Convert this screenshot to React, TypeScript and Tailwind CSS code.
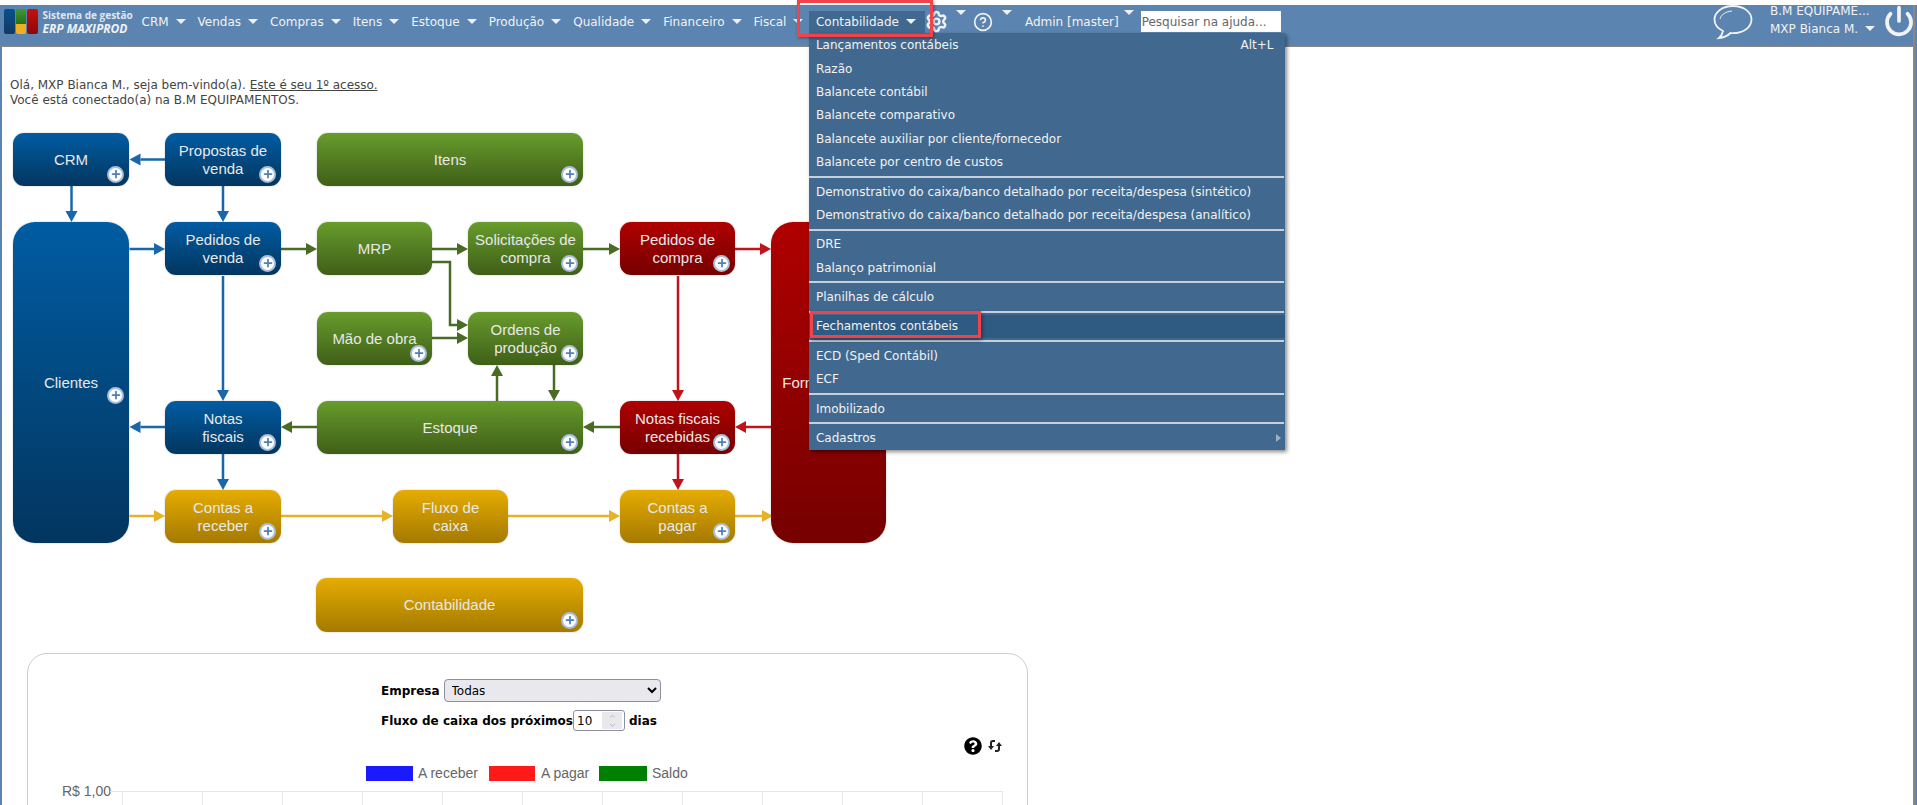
import { ChevronDown, ChevronUp, CircleHelp, Plus, Power, Settings } from "lucide-react";
import { FaQuestionCircle } from "react-icons/fa";

// Top menu entries, left to right
const navItems = ["CRM", "Vendas", "Compras", "Itens", "Estoque", "Produção", "Qualidade", "Financeiro", "Fiscal"];

// Contabilidade dropdown, one array per block between separators
const menuGroups = [
  ["Lançamentos contábeis", "Razão", "Balancete contábil", "Balancete comparativo", "Balancete auxiliar por cliente/fornecedor", "Balancete por centro de custos"],
  ["Demonstrativo do caixa/banco detalhado por receita/despesa (sintético)", "Demonstrativo do caixa/banco detalhado por receita/despesa (analítico)"],
  ["DRE", "Balanço patrimonial"],
  ["Planilhas de cálculo"],
  ["Fechamentos contábeis"],
  ["ECD (Sped Contábil)", "ECF"],
  ["Imobilizado"],
  ["Cadastros"],
];

const BLUE = "bg-gradient-to-b from-[#015ca3] to-[#02365f]";
const GREEN = "bg-gradient-to-b from-[#689c2c] to-[#3f5f18]";
const RED = "bg-gradient-to-b from-[#b00000] to-[#760000]";
const GOLD = "bg-gradient-to-b from-[#e6ac00] to-[#a47a00]";

// Diagram nodes, placed on the canvas
const nodes = [
  { label: ["CRM"], color: BLUE, box: "left-[0px] top-[0px] w-[116px] h-[53px]" },
  { label: ["Propostas de", "venda"], color: BLUE, box: "left-[152px] top-[0px] w-[116px] h-[53px]" },
  { label: ["Itens"], color: GREEN, box: "left-[304px] top-[0px] w-[266px] h-[53px]" },
  { label: ["Clientes"], color: BLUE, box: "left-[0px] top-[89px] w-[116px] h-[321px] rounded-[22px]", badge: "bottom-[139.5px]" },
  { label: ["Pedidos de", "venda"], color: BLUE, box: "left-[152px] top-[89px] w-[116px] h-[53px]" },
  { label: ["MRP"], color: GREEN, box: "left-[304px] top-[89px] w-[115px] h-[53px]", noBadge: true },
  { label: ["Solicitações de", "compra"], color: GREEN, box: "left-[455px] top-[89px] w-[115px] h-[53px]" },
  { label: ["Pedidos de", "compra"], color: RED, box: "left-[607px] top-[89px] w-[115px] h-[53px]" },
  { label: ["Fornecedores"], color: RED, box: "left-[758px] top-[89px] w-[115px] h-[321px] rounded-[22px]", noBadge: true },
  { label: ["Mão de obra"], color: GREEN, box: "left-[304px] top-[179px] w-[115px] h-[53px]" },
  { label: ["Ordens de", "produção"], color: GREEN, box: "left-[455px] top-[179px] w-[115px] h-[53px]" },
  { label: ["Notas", "fiscais"], color: BLUE, box: "left-[152px] top-[268px] w-[116px] h-[53px]" },
  { label: ["Estoque"], color: GREEN, box: "left-[304px] top-[268px] w-[266px] h-[53px]" },
  { label: ["Notas fiscais", "recebidas"], color: RED, box: "left-[607px] top-[268px] w-[115px] h-[53px]" },
  { label: ["Contas a", "receber"], color: GOLD, box: "left-[152px] top-[357px] w-[116px] h-[53px]" },
  { label: ["Fluxo de", "caixa"], color: GOLD, box: "left-[380px] top-[357px] w-[115px] h-[53px]", noBadge: true },
  { label: ["Contas a", "pagar"], color: GOLD, box: "left-[607px] top-[357px] w-[115px] h-[53px]" },
  { label: ["Contabilidade"], color: GOLD, box: "left-[303px] top-[445px] w-[267px] h-[54px]" },
];

const lineBlue = "#1a66ab";
const lineGreen = "#4a6b24";
const lineRed = "#c0141c";
const lineGold = "#e8b228";

// Connectors in page coordinates, the last point is the arrow tip
const arrows: { pts: number[][]; color: string }[] = [
  { pts: [[165, 160.5], [129.5, 160.5]], color: lineBlue },
  { pts: [[71.5, 187], [71.5, 223]], color: lineBlue },
  { pts: [[223, 187], [223, 223]], color: lineBlue },
  { pts: [[129.5, 250], [165, 250]], color: lineBlue },
  { pts: [[223, 277], [223, 402]], color: lineBlue },
  { pts: [[165, 428], [129.5, 428]], color: lineBlue },
  { pts: [[223, 455], [223, 491]], color: lineBlue },
  { pts: [[281, 250], [317, 250]], color: lineGreen },
  { pts: [[432, 250], [468, 250]], color: lineGreen },
  { pts: [[583, 250], [620, 250]], color: lineGreen },
  { pts: [[432, 263], [450, 263], [450, 326], [468, 326]], color: lineGreen },
  { pts: [[432, 339], [468, 339]], color: lineGreen },
  { pts: [[497, 402], [497, 366]], color: lineGreen },
  { pts: [[554, 366], [554, 402]], color: lineGreen },
  { pts: [[317, 428], [281, 428]], color: lineGreen },
  { pts: [[620, 428], [583, 428]], color: lineGreen },
  { pts: [[735, 250], [771, 250]], color: lineRed },
  { pts: [[678, 277], [678, 402]], color: lineRed },
  { pts: [[771, 428], [735, 428]], color: lineRed },
  { pts: [[678, 455], [678, 491]], color: lineRed },
  { pts: [[129.5, 517], [165, 517]], color: lineGold },
  { pts: [[281, 517], [393, 517]], color: lineGold },
  { pts: [[508, 517], [620, 517]], color: lineGold },
  { pts: [[735, 517], [773, 517]], color: lineGold },
];

const Caret = () => (
  <span className="w-0 h-0 border-x-[5px] border-t-[5px] border-x-transparent border-t-[#f0f0f0]" />
);

const Arrow = ({ pts, color }: { pts: number[][]; color: string }) => {
  const [x1, y1] = pts[pts.length - 2];
  const [x2, y2] = pts[pts.length - 1];
  const len = Math.hypot(x2 - x1, y2 - y1);
  const ux = (x2 - x1) / len;
  const uy = (y2 - y1) / len;
  const bx = x2 - ux * 11;
  const by = y2 - uy * 11;
  const line = pts.slice(0, -1).concat([[bx, by]]).map((p) => p.join(",")).join(" ");
  const head = `${x2},${y2} ${bx - uy * 6},${by + ux * 6} ${bx + uy * 6},${by - ux * 6}`;
  return (
    <>
      <polyline points={line} fill="none" stroke={color} strokeWidth="2.5" />
      <polygon points={head} fill={color} />
    </>
  );
};

const Node = ({ label, color, box, badge, noBadge }: { label: string[]; color: string; box: string; badge?: string; noBadge?: boolean }) => (
  <div className={`absolute rounded-[11px] flex flex-col items-center justify-center text-[15px] leading-[18px] text-[#e8e8e8] shadow-[0_0_2px_rgba(0,0,0,0.25)] ${color} ${box}`}>
    {label.map((line) => (
      <span key={line}>{line}</span>
    ))}
    {!noBadge && (
      <span className={`absolute right-[5px] w-[17px] h-[17px] rounded-full bg-white border-2 border-[#a9bedb] flex items-center justify-center ${badge ?? "bottom-[3.5px]"}`}>
        <Plus size={12} strokeWidth={3.5} className="text-[#4f7fb5]" />
      </span>
    )}
  </div>
);

// Contabilidade dropdown
const AccountingMenu = () => (
  <div className="absolute left-0 top-full w-[475.5px] pt-[1px] pb-[0.5px] bg-[#41698f] text-[#f2f2f2] shadow-[2px_2px_4px_rgba(0,0,0,0.45)] z-20">
    {menuGroups.map((group, i) => (
      <div key={i}>
        {i > 0 && <div className="h-[2px] my-[2px] mr-[1px] bg-[#c5d0dc]" />}
        {group.map((item) => (
          <div
            key={item}
            className={`h-[23.4px] pl-[6.5px] pr-[11.5px] flex items-center justify-between whitespace-nowrap ${item === "Fechamentos contábeis" ? "bg-[#2f5a82]" : ""}`}
          >
            <span>{item}</span>
            {item === "Lançamentos contábeis" && <span>Alt+L</span>}
            {item === "Cadastros" && (
              <span className="-mr-[8px] w-0 h-0 border-y-[4px] border-l-[5px] border-y-transparent border-l-[#9fb0c2]" />
            )}
          </div>
        ))}
      </div>
    ))}
    {/* red marker around the highlighted entry */}
    <div className="absolute left-[0.5px] top-[278px] w-[171px] h-[27px] border-[3px] border-[#f3434a] shadow-[1px_2px_4px_rgba(0,0,0,0.45)]" />
  </div>
);

export default function App() {
  return (
    <div className="w-[1917px] h-[805px] overflow-hidden bg-white pt-[5px] text-[12px] font-['DejaVu_Sans',Verdana,sans-serif]">
      <div className="h-[800px] border-r-2 border-[#5b84b1]">
        <div className="h-[800px] border-r-2 border-[#888888] flex flex-col">
          {/* top bar */}
          <header className="relative h-[42px] shrink-0 bg-[#5b84b1] border-b border-[#888888] pb-[8px] pl-[4px] flex items-center text-[#f2f2f2] z-10">
            {/* logo */}
            <div className="flex items-center gap-[1px] h-[25px] mr-[5px]">
              <span className="w-[10.5px] h-[25px] rounded-[2px] bg-gradient-to-b from-[#06508e] to-[#123a62]" />
              <span className="w-[10.5px] h-[25px] rounded-[2px] flex flex-col overflow-hidden">
                <span className="h-[15px] bg-gradient-to-b from-[#3d9a2f] to-[#2a6d1f]" />
                <span className="h-[10px] bg-[#eeb01c]" />
              </span>
              <span className="w-[10.5px] h-[25px] rounded-[2px] bg-gradient-to-b from-[#c51010] to-[#8e0808]" />
            </div>
            <div className="w-[99px] flex flex-col font-['Open_Sans',sans-serif] font-bold leading-[14px] whitespace-nowrap">
              <span className="text-[10px] text-[#dfe6ee]">Sistema de gestão</span>
              <span className="text-[12px] italic">ERP MAXIPROD</span>
            </div>

            {navItems.map((item) => (
              <div key={item} className="flex items-center gap-[7px] mr-[12px]">
                <span>{item}</span>
                <Caret />
              </div>
            ))}

            {/* open menu */}
            <div className="relative h-[22px] w-[115.5px] -ml-[6px] pl-[6.5px] bg-[#41698f] flex items-center gap-[7px]">
              <span>Contabilidade</span>
              <Caret />
              <div className="absolute -left-[12.5px] -top-[11px] w-[136.5px] h-[37.5px] border-[3px] border-[#f3434a] shadow-[1px_1px_3px_rgba(0,0,0,0.4)] z-30" />
              <AccountingMenu />
            </div>

            <Settings size={23} strokeWidth={2.6} className="ml-[0px] text-[#eef1f5]" />
            <span className="ml-[8px]"><Caret /></span>
            <CircleHelp size={20} strokeWidth={2} className="ml-[7px] text-[#f2f2f2]" />
            <span className="ml-[9px]"><Caret /></span>
            <span className="ml-[13px]">Admin [master]</span>
            <span className="ml-[5px]"><Caret /></span>
            <input
              readOnly
              placeholder="Pesquisar na ajuda..."
              className="ml-[7px] w-[140px] h-[21px] pl-[1px] bg-white text-[12px] outline-none placeholder:text-[#666666]"
            />

            {/* right side */}
            <svg viewBox="0 0 40 36" className="ml-auto w-[40px] h-[36px] mr-[17px]" fill="none" stroke="#f2f2f2" strokeWidth="1.8">
              <path d="M20 2C9.5 2 1.5 8 1.5 15.5c0 5 3.4 9 8.500 11.500-.5 2.500-1.500 5-4 7 5-.5 9-2.500 11.500-5 1 .1 1.800.2 2.500.2 10.500 0 18.500-6 18.500-13.700S30.500 2 20 2z" />
              <path d="M7 15c1-4.500 6-7.500 12-8" strokeWidth="1" />
            </svg>
            <div className="flex flex-col leading-[18px] w-[116px] -mt-[4px]">
              <span>B.M EQUIPAME...</span>
              <span className="flex items-center gap-[7px]">
                MXP Bianca M. <Caret />
              </span>
            </div>
            <Power size={32} strokeWidth={2.8} className="text-[#f2f2f2] mr-[-2px] ml-[-3px] -mt-[2px]" />
          </header>

          <main className="flex-1 overflow-hidden bg-white border-l-2 border-[#5b84b1]">
            <p className="pt-[31px] pl-[8px] leading-[15px] text-[#444444]">
              Olá, MXP Bianca M., seja bem-vindo(a). <span className="underline">Este é seu 1º acesso.</span>
              <br />
              Você está conectado(a) na B.M EQUIPAMENTOS.
            </p>

            {/* process diagram */}
            <div className="relative ml-[11px] mt-[25px] w-[880px] h-[499px] font-['Liberation_Sans',Arial,sans-serif]">
              <svg viewBox="13 134 880 499" className="absolute inset-0 w-[880px] h-[499px]">
                {arrows.map((a, i) => (
                  <Arrow key={i} pts={a.pts} color={a.color} />
                ))}
              </svg>
              {nodes.map((n) => (
                <Node key={n.label.join(" ")} {...n} />
              ))}
            </div>

            {/* cash flow card */}
            <section className="ml-[25px] mt-[21px] w-[1001px] h-[220px] border border-[#cccccc] rounded-[20px] pt-[25px]">
              <div className="ml-[353px] text-black">
                <div className="flex items-center">
                  <label className="font-bold w-[62.5px]">Empresa</label>
                  <select className="w-[217px] h-[23px] pl-[3px] bg-[#e9e9ed] border border-[#8f8f9d] rounded-[4px]">
                    <option>Todas</option>
                  </select>
                </div>
                <div className="flex items-center mt-[8px]">
                  <label className="font-bold w-[192px] whitespace-nowrap">Fluxo de caixa dos próximos</label>
                  <div className="w-[52px] h-[21px] pl-[3px] pr-[2px] border border-[#8f8f9d] rounded-[3px] flex items-center justify-between">
                    <span>10</span>
                    <span className="w-[20px] h-[17px] bg-[#e9e9ed] flex flex-col items-center text-[#8a8a8a]">
                      <ChevronUp size={9} strokeWidth={1.5} />
                      <ChevronDown size={9} strokeWidth={1.5} />
                    </span>
                  </div>
                  <span className="font-bold ml-[4px]">dias</span>
                </div>
              </div>

              <div className="flex items-center justify-end gap-[5px] mt-[6px] pr-[24px] h-[18px]">
                <FaQuestionCircle size={18} className="text-black" />
                <svg viewBox="0 0 16 16" className="w-[16px] h-[16px]" fill="none" stroke="#222222" strokeWidth="2">
                  <path d="M8 3H6a2 2 0 0 0-2 2v4" />
                  <path d="M1 8h6l-3 4z" fill="#222222" stroke="none" />
                  <path d="M8 13h2a2 2 0 0 0 2-2V7" />
                  <path d="M9 8h6l-3-4z" fill="#222222" stroke="none" />
                </svg>
              </div>

              <div className="flex items-center ml-[338px] mt-[11px] h-[15px] font-['Liberation_Sans',Arial,sans-serif] text-[14px] text-[#666666]">
                <span className="w-[47px] h-[15px] bg-[#1a1aff]" />
                <span className="ml-[5px] w-[71px]">A receber</span>
                <span className="w-[46px] h-[15px] bg-[#ff1a1a]" />
                <span className="ml-[6px] w-[58px]">A pagar</span>
                <span className="w-[48px] h-[15px] bg-[#008000]" />
                <span className="ml-[5px]">Saldo</span>
              </div>

              {/* empty chart, only the top of it is visible */}
              <div className="flex mt-[3px] pl-[34px] font-['Liberation_Sans',Arial,sans-serif] text-[14px] text-[#666666]">
                <span className="w-[48px] leading-[14px] whitespace-nowrap">R$ 1,00</span>
                <span className="w-[12px] h-0 mt-[7px] border-t border-[#e6e6e6]" />
                <div className="flex mt-[7px] border-t border-r border-[#e6e6e6]">
                  {Array.from({ length: 11 }).map((_, i) => (
                    <div key={i} className="w-[80px] h-[60px] border-l border-[#e6e6e6]" />
                  ))}
                </div>
              </div>
            </section>
          </main>
        </div>
      </div>
    </div>
  );
}
